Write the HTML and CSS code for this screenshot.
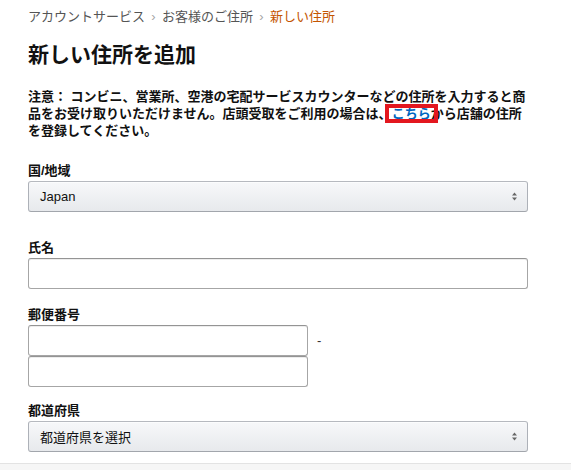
FILE: index.html
```html
<!DOCTYPE html>
<html lang="ja">
<head>
<meta charset="utf-8">
<title>新しい住所を追加</title>
<link rel="stylesheet" href="styles.css">
</head>
<body>
<div class="page">
  <nav class="crumbs">
    <span class="crumb">アカウントサービス</span><span class="sep">›</span><span class="crumb">お客様のご住所</span><span class="sep">›</span><span class="crumb current">新しい住所</span>
  </nav>
  <h1 class="title">新しい住所を追加</h1>
  <p class="note">注意： コンビニ、営業所、空港の宅配サービスカウンターなどの住所を入力すると商品をお受け取りいただけません。店頭受取をご利用の場合は、<span class="mark"><a class="link" href="#">こちら</a></span>から店舗の住所を登録してください。</p>
  <form class="form">
    <div class="group group-country">
      <label class="field-label">国/地域</label>
      <div class="dropdown">
        <span class="dropdown-text">Japan</span>
        <svg class="dropdown-arrow" width="5" height="9" viewBox="0 0 5 9"><path d="M0 3.6 L2.5 0.6 L5 3.6 Z M0 5.4 L2.5 8.4 L5 5.4 Z" fill="#666"/></svg>
      </div>
    </div>
    <div class="group group-name">
      <label class="field-label">氏名</label>
      <input class="text-input" type="text">
    </div>
    <div class="group group-postal">
      <label class="field-label">郵便番号</label>
      <div class="postal-row">
        <input class="text-input postal-input" type="text">
        <span class="postal-dash">-</span>
      </div>
      <input class="text-input postal-input" type="text">
    </div>
    <div class="group group-pref">
      <label class="field-label">都道府県</label>
      <div class="dropdown">
        <span class="dropdown-text">都道府県を選択</span>
        <svg class="dropdown-arrow" width="5" height="9" viewBox="0 0 5 9"><path d="M0 3.6 L2.5 0.6 L5 3.6 Z M0 5.4 L2.5 8.4 L5 5.4 Z" fill="#666"/></svg>
      </div>
    </div>
  </form>
</div>
<div class="footer"></div>
</body>
</html>
```

FILE: styles.css
```css
html, body {
  margin: 0;
  padding: 0;
  background: #fff;
}

body {
  font-family: "Liberation Sans", "Noto Sans CJK JP", sans-serif;
  color: #111;
  overflow: hidden;
}

.page {
  padding: 7px 0 0 28px;
  width: 500px;
}

.crumbs {
  display: flex;
  font-size: 13px;
  line-height: 19px;
  color: #555;
}

.sep {
  width: 17px;
  text-align: center;
  color: #a6a6a6;
}

.current {
  color: #c45500;
}

.title {
  margin: 15px 0 0;
  font-size: 21px;
  line-height: 28px;
  font-weight: 700;
  color: #111;
}

.note {
  margin: 19px 0 0;
  font-size: 13px;
  line-height: 17px;
  font-weight: 700;
  color: #111;
}

.mark {
  position: relative;
}

.mark::after {
  content: "";
  position: absolute;
  left: -7px;
  right: -7px;
  top: -2px;
  bottom: -2px;
  border: 4px solid #e3171f;
}

.link {
  color: #0066c0;
  text-decoration: underline;
}

.form {
  margin: 0;
}

.group {
  display: flex;
  flex-direction: column;
}

.group-country {
  margin-top: 22px;
}

.group-name {
  margin-top: 26px;
}

.group-postal {
  margin-top: 16px;
}

.group-pref {
  margin-top: 14px;
}

.field-label {
  display: block;
  font-size: 13px;
  line-height: 19px;
  font-weight: 700;
  margin-bottom: 1px;
}

.dropdown {
  box-sizing: border-box;
  height: 31px;
  display: flex;
  align-items: center;
  justify-content: space-between;
  padding: 0 10px 0 11px;
  border: 1px solid #adb1b8;
  border-top-color: #b6b9bf;
  border-bottom-color: #a2a6ac;
  border-radius: 3px;
  background: linear-gradient(to bottom, #f7f8fa, #e7e9ec);
  box-shadow: 0 1px 0 rgba(255, 255, 255, 0.6) inset;
  font-size: 13px;
  color: #111;
}

.dropdown-arrow {
  display: block;
}

.text-input {
  box-sizing: border-box;
  display: block;
  width: 100%;
  height: 31px;
  margin: 0;
  padding: 3px 7px;
  border: 1px solid #a6a6a6;
  border-top-color: #949494;
  border-radius: 3px;
  box-shadow: 0 1px 0 rgba(255, 255, 255, 0.5), 0 1px 0 rgba(0, 0, 0, 0.07) inset;
  background: #fff;
  font-size: 13px;
  font-family: inherit;
  outline: none;
}

.postal-row {
  display: flex;
  align-items: center;
  gap: 9px;
}

.postal-input {
  width: 280px;
}

.postal-dash {
  font-size: 13px;
  color: #333;
  line-height: 19px;
}

.footer {
  margin-top: 11px;
  height: 7px;
  border-top: 1px solid #e3e3e3;
  background: #f6f6f6;
}
```
